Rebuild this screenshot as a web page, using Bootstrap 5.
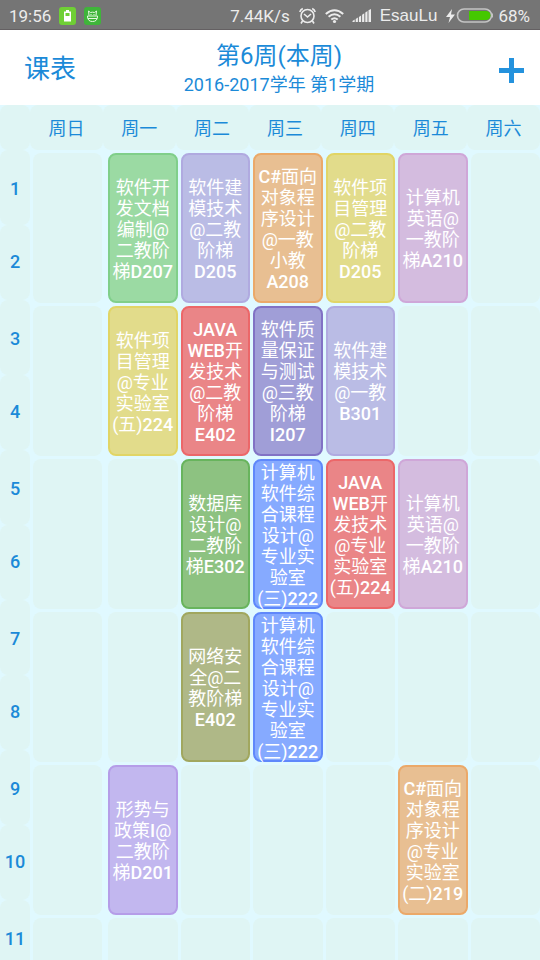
<!DOCTYPE html>
<html lang="zh-CN">
<head>
<meta charset="utf-8">
<meta name="viewport" content="width=device-width, initial-scale=1">
<title>课表</title>
<link href="https://cdn.jsdelivr.net/npm/bootstrap@5.3.0/dist/css/bootstrap.min.css" rel="stylesheet">
<style>
  :root { --ink: #1b8ad8; --page: #e0f9ff; --cell: #dff5f4; }
  body { font-family: Roboto, "Noto Sans CJK SC", sans-serif; background: var(--page); color: var(--ink); font-size: 18px; line-height: 21px; }
  .status { height: 30px; background: #757575; border-bottom: 1px solid #646062; color: #ececec; font-size: 17px; line-height: 20px; padding: 2px 10px 0 9px; }
  .status svg { display: block; flex: none; }
  .carrier { font-family: "Liberation Sans", sans-serif; margin-left: 8px; margin-right: 8px; }
  .topbar { height: 75px; padding: 2px 16px 0 24px; }
  .topbar h1 { font-size: 26px; line-height: 30px; font-weight: 400; }
  .topbar h2 { font-size: 24px; line-height: 28px; font-weight: 400; }
  .side-start { width: 70px; }
  .side-end { width: 60px; }
  .grid-table { table-layout: fixed; width: 100%; border-collapse: collapse; }
  .grid-table th, .grid-table td { padding: 0; text-align: center; }
  .time-col { width: 30px; }
  .head-cell, .period { background: var(--cell); border-radius: 8px; }
  .head-cell { height: 45px; padding-top: 2px; font-weight: 400; }
  .period { height: 75px; font-weight: 500; }
  .period span { padding-bottom: 2px; }
  .scroller { scrollbar-width: none; }
  .scroller::-webkit-scrollbar { display: none; }
  .first-col { width: 75px; }
  .courses td { height: 153px; padding: 3px 0 0 3px; }
  .courses td:first-child { padding-right: 3px; }
  .slot { height: 150px; border-radius: 8px; background: var(--cell); }
  .course { border: 2px solid; color: #fff; white-space: nowrap; }
  .course span { padding-top: 2px; }
  .course b { font-weight: 500; }
  .c-mint { background: #9bdaa3; border-color: #80cf8a; }
  .c-lilac { background: #babce5; border-color: #b0aae0; }
  .c-orange { background: #e8bf92; border-color: #eba969; }
  .c-yellow { background: #e2dc8b; border-color: #e1d566; }
  .c-pink { background: #d4bcdf; border-color: #cfa7d8; }
  .c-red { background: #ea8587; border-color: #ec6769; }
  .c-indigo { background: #a09ed7; border-color: #8172c5; }
  .c-green { background: #8dc281; border-color: #68b45d; }
  .c-blue { background: #86aaff; border-color: #5f88fb; }
  .c-olive { background: #afb887; border-color: #a1a75f; }
  .c-violet { background: #c2b7ef; border-color: #b59de8; }
</style>
<script src="https://cdn.jsdelivr.net/npm/bootstrap@5.3.0/dist/js/bootstrap.bundle.min.js"></script>
</head>
<body>
<div class="vh-100 d-flex flex-column overflow-hidden">
  <div class="status d-flex align-items-center justify-content-between flex-shrink-0">
    <div class="d-flex align-items-center">
      <span>19:56</span>
      <svg class="ms-2" width="17" height="18" viewBox="0 0 17 18" aria-hidden="true"><rect width="17" height="18" rx="3" fill="#6fcf35"/><path d="M7 3h3v1.500h2v10H5v-10h2z" fill="#fff"/><rect x="6.500" y="6" width="4" height="3" fill="#6fcf35"/></svg>
      <svg class="ms-2" width="17" height="18" viewBox="0 0 17 18" aria-hidden="true"><rect width="17" height="18" rx="3" fill="#3fb53a"/><g fill="none" stroke="#e5f9df" stroke-width="1"><path d="M5 8.500 4.500 4 6.500 5.500q2-.6 4 0l2-1.500-.5 4.500"/><path d="M3.500 9h10v1q-.5 4.500-5 4.500t-5-4.500z"/><path d="M4 11.500h9M6.500 7.500h1M9.500 7.500h1"/></g></svg>
    </div>
    <div class="d-flex align-items-center">
      <span>7.44K/s</span>
      <svg class="ms-2" width="19" height="18" viewBox="0 0 19 18" fill="none" stroke="#ececec" stroke-width="1.600" role="img" aria-label="闹钟"><circle cx="9.500" cy="9" r="6.500"/><path d="M1.800 5q.7-2.500 3-3.500M17.200 5q-.7-2.500-3-3.500M6 7l3.500 3L13 7M4.500 14 3 16.500M14.500 14l1.500 2.500"/></svg>
      <svg class="ms-2" width="19" height="16" viewBox="0 0 19 16" fill="none" stroke="#ececec" stroke-width="2" role="img" aria-label="WLAN"><path d="M.8 6Q9.500-1.500 18.200 6M3.600 8.800q5.900-5 11.800 0M6.300 11.500q3.200-2.600 6.400 0"/><circle cx="9.500" cy="13.500" r="1.600" fill="#ececec" stroke="none"/></svg>
      <svg class="ms-2" width="20" height="15" viewBox="0 0 20 15" fill="#ececec" role="img" aria-label="信号"><path d="M.5 14v-1l2.200-1.500V14zM3.700 14v-3l2.200-1.500V14zM6.900 14V9l2.200-1.500V14zM10.100 14V6.800l2.200-1.500V14zM13.300 14V4.500L15.500 3v11zM16.500 14V2.200L19 1v13z"/></svg>
      <span class="carrier">EsauLu</span>
      <svg width="11" height="16" viewBox="0 0 11 16" fill="#ececec" aria-hidden="true"><path d="M7 1 1 9h4L3.500 15 10 6.500H6z"/></svg>
      <svg class="me-1" width="38" height="15" viewBox="0 0 38 15" role="img" aria-label="电量"><rect x="1.500" y="1" width="34" height="13" rx="6.500" fill="#757575" stroke="#c4c4c4" stroke-width="1.600"/><path d="M13 3h17a4.500 4.500 0 0 1 0 9H13z" fill="#45c800"/><path d="M36.500 5.500v4" stroke="#c4c4c4" stroke-width="1"/></svg>
      <span>68%</span>
    </div>
  </div>

  <header class="topbar bg-white d-flex align-items-center justify-content-between flex-shrink-0">
    <div class="side-start"><h1 class="m-0">课表</h1></div>
    <div class="text-center">
      <h2 class="m-0">第6周(本周)</h2>
      <div class="pt-1">2016-2017学年 第1学期</div>
    </div>
    <div class="side-end d-flex justify-content-end">
      <button type="button" class="btn p-0 border-0" aria-label="添加课程">
        <svg class="d-block mt-1" width="25" height="25" viewBox="0 0 25 25" stroke="#2492dd" stroke-width="5"><path d="M12.500 0v25M0 12.500h25"/></svg>
      </button>
    </div>
  </header>

  <table class="grid-table flex-shrink-0" aria-label="星期">
    <colgroup><col class="time-col"><col span="7"></colgroup>
    <thead><tr>
      <td><div class="head-cell"></div></td>
      <th scope="col"><div class="head-cell d-flex align-items-center justify-content-center">周日</div></th>
      <th scope="col"><div class="head-cell d-flex align-items-center justify-content-center">周一</div></th>
      <th scope="col"><div class="head-cell d-flex align-items-center justify-content-center">周二</div></th>
      <th scope="col"><div class="head-cell d-flex align-items-center justify-content-center">周三</div></th>
      <th scope="col"><div class="head-cell d-flex align-items-center justify-content-center">周四</div></th>
      <th scope="col"><div class="head-cell d-flex align-items-center justify-content-center">周五</div></th>
      <th scope="col"><div class="head-cell d-flex align-items-center justify-content-center">周六</div></th>
    </tr></thead>
  </table>

  <main class="scroller d-flex align-items-start flex-grow-1 overflow-auto">
    <div class="time-col flex-shrink-0">
      <div class="period d-flex align-items-center justify-content-center pt-1"><span>1</span></div>
      <div class="period d-flex align-items-center justify-content-center"><span>2</span></div>
      <div class="period d-flex align-items-center justify-content-center pt-1"><span>3</span></div>
      <div class="period d-flex align-items-center justify-content-center"><span>4</span></div>
      <div class="period d-flex align-items-center justify-content-center pt-1"><span>5</span></div>
      <div class="period d-flex align-items-center justify-content-center"><span>6</span></div>
      <div class="period d-flex align-items-center justify-content-center pt-1"><span>7</span></div>
      <div class="period d-flex align-items-center justify-content-center"><span>8</span></div>
      <div class="period d-flex align-items-center justify-content-center pt-1"><span>9</span></div>
      <div class="period d-flex align-items-center justify-content-center"><span>10</span></div>
      <div class="period d-flex align-items-center justify-content-center pt-1"><span>11</span></div>
    </div>
    <table class="grid-table courses flex-grow-1" aria-label="课程">
      <colgroup><col class="first-col"><col span="6"></colgroup>
      <tbody>
        <tr>
          <td><div class="slot"></div></td>
          <td><div class="slot course c-mint d-flex align-items-center justify-content-center"><span>软件开<br>发文档<br>编制@<br>二教阶<br>梯<b>D207</b></span></div></td>
          <td><div class="slot course c-lilac d-flex align-items-center justify-content-center"><span>软件建<br>模技术<br>@二教<br>阶梯<br><b>D205</b></span></div></td>
          <td><div class="slot course c-orange d-flex align-items-center justify-content-center"><span><b>C#</b>面向<br>对象程<br>序设计<br>@一教<br>小教<br><b>A208</b></span></div></td>
          <td><div class="slot course c-yellow d-flex align-items-center justify-content-center"><span>软件项<br>目管理<br>@二教<br>阶梯<br><b>D205</b></span></div></td>
          <td><div class="slot course c-pink d-flex align-items-center justify-content-center"><span>计算机<br>英语@<br>一教阶<br>梯<b>A210</b></span></div></td>
          <td><div class="slot"></div></td>
        </tr>
        <tr>
          <td><div class="slot"></div></td>
          <td><div class="slot course c-yellow d-flex align-items-center justify-content-center"><span>软件项<br>目管理<br>@专业<br>实验室<br>(五)<b>224</b></span></div></td>
          <td><div class="slot course c-red d-flex align-items-center justify-content-center"><span><b>JAVA</b><br><b>WEB</b>开<br>发技术<br>@二教<br>阶梯<br><b>E402</b></span></div></td>
          <td><div class="slot course c-indigo d-flex align-items-center justify-content-center"><span>软件质<br>量保证<br>与测试<br>@三教<br>阶梯<br><b>I207</b></span></div></td>
          <td><div class="slot course c-lilac d-flex align-items-center justify-content-center"><span>软件建<br>模技术<br>@一教<br><b>B301</b></span></div></td>
          <td><div class="slot"></div></td>
          <td><div class="slot"></div></td>
        </tr>
        <tr>
          <td><div class="slot"></div></td>
          <td><div class="slot"></div></td>
          <td><div class="slot course c-green d-flex align-items-center justify-content-center"><span>数据库<br>设计@<br>二教阶<br>梯<b>E302</b></span></div></td>
          <td><div class="slot course c-blue d-flex align-items-center justify-content-center"><span>计算机<br>软件综<br>合课程<br>设计@<br>专业实<br>验室<br>(三)<b>222</b></span></div></td>
          <td><div class="slot course c-red d-flex align-items-center justify-content-center"><span><b>JAVA</b><br><b>WEB</b>开<br>发技术<br>@专业<br>实验室<br>(五)<b>224</b></span></div></td>
          <td><div class="slot course c-pink d-flex align-items-center justify-content-center"><span>计算机<br>英语@<br>一教阶<br>梯<b>A210</b></span></div></td>
          <td><div class="slot"></div></td>
        </tr>
        <tr>
          <td><div class="slot"></div></td>
          <td><div class="slot"></div></td>
          <td><div class="slot course c-olive d-flex align-items-center justify-content-center"><span>网络安<br>全@二<br>教阶梯<br><b>E402</b></span></div></td>
          <td><div class="slot course c-blue d-flex align-items-center justify-content-center"><span>计算机<br>软件综<br>合课程<br>设计@<br>专业实<br>验室<br>(三)<b>222</b></span></div></td>
          <td><div class="slot"></div></td>
          <td><div class="slot"></div></td>
          <td><div class="slot"></div></td>
        </tr>
        <tr>
          <td><div class="slot"></div></td>
          <td><div class="slot course c-violet d-flex align-items-center justify-content-center"><span>形势与<br>政策<b>I</b>@<br>二教阶<br>梯<b>D201</b></span></div></td>
          <td><div class="slot"></div></td>
          <td><div class="slot"></div></td>
          <td><div class="slot"></div></td>
          <td><div class="slot course c-orange d-flex align-items-center justify-content-center"><span><b>C#</b>面向<br>对象程<br>序设计<br>@专业<br>实验室<br>(二)<b>219</b></span></div></td>
          <td><div class="slot"></div></td>
        </tr>
        <tr>
          <td><div class="slot"></div></td>
          <td><div class="slot"></div></td>
          <td><div class="slot"></div></td>
          <td><div class="slot"></div></td>
          <td><div class="slot"></div></td>
          <td><div class="slot"></div></td>
          <td><div class="slot"></div></td>
        </tr>
      </tbody>
    </table>
  </main>
</div>
</body>
</html>
